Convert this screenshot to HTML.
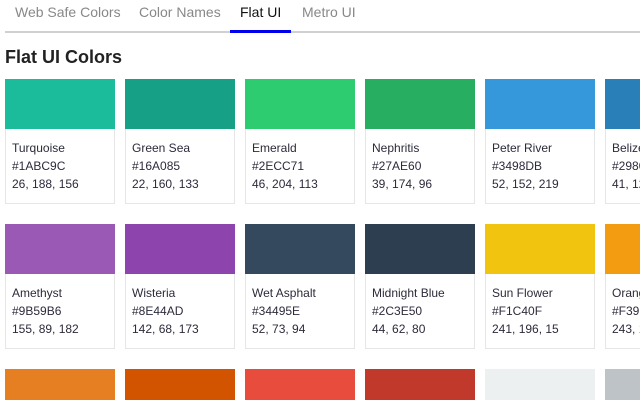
<!DOCTYPE html><html><head><style>
html{overflow:hidden}
body{margin:0;width:640px;height:400px;overflow:hidden;background:#fff;font-family:"Liberation Sans",sans-serif;position:relative}
.tabs{position:absolute;left:5px;top:0;width:635px;height:33px;border-bottom:2px solid #d0d0d0;box-sizing:border-box}
.tab{position:absolute;top:4px;font-size:14px;color:#888}
.tab.a{color:#111}
.ul{position:absolute;left:230px;top:30px;width:61px;height:3px;background:#0000ee}
h1{position:absolute;left:5px;top:47px;margin:0;font-size:18px;font-weight:bold;color:#222}
#g{position:absolute;left:0;top:0;width:640px;height:400px;overflow:hidden}
.c{position:absolute;width:110px;height:125px;box-sizing:border-box;border:1px solid #e6e6e6;border-top:none}
.s{position:absolute;left:-1px;top:0;width:110px;height:50px}
.t{position:absolute;left:6px;top:60px;font-size:12px;line-height:18px;color:#2b2b3b;white-space:nowrap}
</style></head><body>
<div class="tabs"></div>
<div class="tab" style="left:15px">Web Safe Colors</div>
<div class="tab" style="left:139px">Color Names</div>
<div class="tab a" style="left:240px">Flat UI</div>
<div class="tab" style="left:302px">Metro UI</div>
<div class="ul"></div>
<h1>Flat UI Colors</h1>
<div id="g"></div>
<script>
var d=[["Turquoise","#1ABC9C"],["Green Sea","#16A085"],["Emerald","#2ECC71"],["Nephritis","#27AE60"],["Peter River","#3498DB"],["Belize Hole","#2980B9"],
["Amethyst","#9B59B6"],["Wisteria","#8E44AD"],["Wet Asphalt","#34495E"],["Midnight Blue","#2C3E50"],["Sun Flower","#F1C40F"],["Orange","#F39C12"],
["Carrot","#E67E22"],["Pumpkin","#D35400"],["Alizarin","#E74C3C"],["Pomegranate","#C0392B"],["Clouds","#ECF0F1"],["Silver","#BDC3C7"]];
var h="";d.forEach(function(e,i){var r=Math.floor(i/6),c=i%6,x=e[1];
var rgb=[1,3,5].map(function(k){return parseInt(x.substr(k,2),16)}).join(", ");
h+='<div class="c" style="left:'+(5+c*120)+'px;top:'+(79+r*145)+'px"><div class="s" style="background:'+x+'"></div><div class="t">'+e[0]+'<br>'+x+'<br>'+rgb+'</div></div>';});
document.getElementById("g").innerHTML=h;
</script>
</body></html>
